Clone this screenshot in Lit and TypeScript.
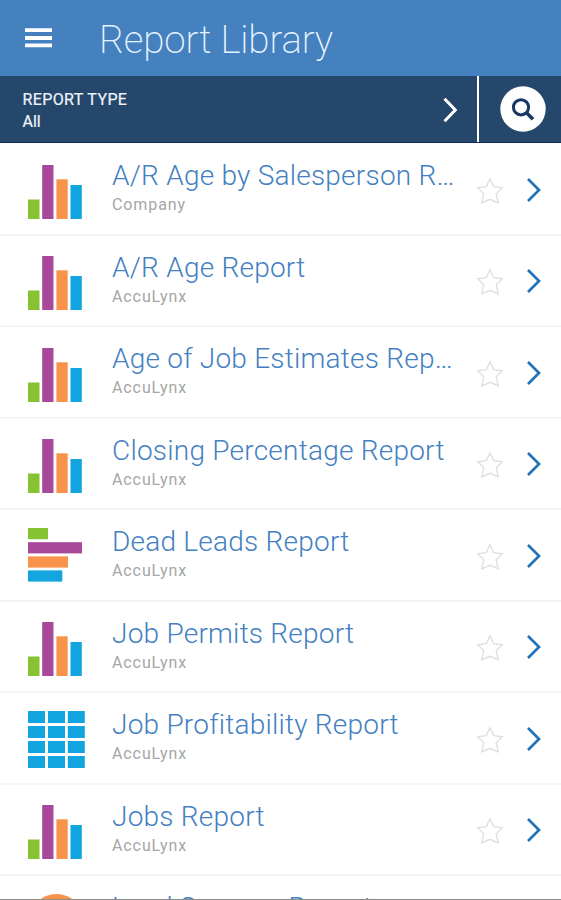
import { LitElement, html, css, svg } from "lit";
import { customElement, property } from "lit/decorators.js";

type Kind = "bars" | "hbars" | "grid" | "pie";

interface Report {
  title: string;
  owner: string;
  kind: Kind;
}

const REPORTS: Report[] = [
  { title: "A/R Age by Salesperson Report", owner: "Company", kind: "bars" },
  { title: "A/R Age Report", owner: "AccuLynx", kind: "bars" },
  { title: "Age of Job Estimates Report", owner: "AccuLynx", kind: "bars" },
  { title: "Closing Percentage Report", owner: "AccuLynx", kind: "bars" },
  { title: "Dead Leads Report", owner: "AccuLynx", kind: "hbars" },
  { title: "Job Permits Report", owner: "AccuLynx", kind: "bars" },
  { title: "Job Profitability Report", owner: "AccuLynx", kind: "grid" },
  { title: "Jobs Report", owner: "AccuLynx", kind: "bars" },
  { title: "Lead Sources Report", owner: "AccuLynx", kind: "pie" },
];

const GREEN = "#86c232";
const PURPLE = "#a8489b";
const ORANGE = "#f9924a";
const BLUE = "#12a5df";

const ICONS = {
  bars: svg`
    <rect x="0" y="34.5" width="11.5" height="19.5" fill=${GREEN} />
    <rect x="14.2" y="0" width="11.3" height="54" fill=${PURPLE} />
    <rect x="28.4" y="14.3" width="11.3" height="39.7" fill=${ORANGE} />
    <rect x="42.5" y="20" width="11.3" height="34" fill=${BLUE} />`,
  hbars: svg`
    <rect x="0" y="0" width="20" height="11.2" fill=${GREEN} />
    <rect x="0" y="14.2" width="54" height="11.2" fill=${PURPLE} />
    <rect x="0" y="28.4" width="40" height="11.2" fill=${ORANGE} />
    <rect x="0" y="42.4" width="34.3" height="11.2" fill=${BLUE} />`,
  grid: svg`${[0, 15, 30, 45].map((y) =>
    [0, 20, 39.8].map(
      (x) => svg`<rect x=${x} y=${y} width="17" height="12" fill=${BLUE} />`
    )
  )}`,
  pie: svg`<circle cx="28.5" cy="27" r="27" fill=${ORANGE} />`,
};

@customElement("report-row")
export class ReportRow extends LitElement {
  @property({ attribute: false }) report!: Report;

  static styles = css`
    :host {
      display: flex;
      box-sizing: border-box;
      height: 91.5px;
      flex: none;
      padding: 0 19px 0 28px;
      border-bottom: 2px solid #f5f5f6;
    }
    .icon {
      flex: none;
      width: 58px;
      height: 58px;
      margin: 20.5px 26px 0 0;
    }
    .icon.hbars {
      margin-top: 18px;
    }
    .icon.grid {
      margin-top: 17.5px;
    }
    .icon.pie {
      margin-top: 17.5px;
    }
    .text {
      flex: none;
      width: 346px;
      padding-top: 15px;
    }
    .title {
      font-size: 28px;
      line-height: 34px;
      font-weight: 300;
      letter-spacing: 0.23px;
      color: #4480c2;
      white-space: nowrap;
      overflow: hidden;
      text-overflow: ellipsis;
    }
    .owner {
      margin-top: 2px;
      font-size: 16px;
      line-height: 20px;
      letter-spacing: 0.9px;
      color: #a6a6a6;
    }
    .star {
      flex: none;
      width: 28px;
      height: 28px;
      margin: 32.5px 0 0 18px;
    }
    .chevron {
      flex: none;
      width: 16px;
      height: 26px;
      margin: 32.5px 0 0 auto;
    }
  `;

  render() {
    const { title, owner, kind } = this.report;
    return html`
      <svg class="icon ${kind}" viewBox="0 0 58 58">${ICONS[kind]}</svg>
      <div class="text">
        <div class="title">${title}</div>
        <div class="owner">${owner}</div>
      </div>
      <svg class="star" viewBox="0 0 28 28">
        <path
          d="M14 1.8 L17.7 9.6 L26.3 10.8 L20.2 16.8 L22.3 25.8 L14 22.3 L5.7 25.8 L7.8 16.8 L1.7 10.8 L10.3 9.6 Z"
          fill="none"
          stroke="#dedede"
          stroke-width="1.3"
        />
      </svg>
      <svg class="chevron" viewBox="0 0 16 26">
        <path d="M2 2 L13 13 L2 24" fill="none" stroke="#2173b9" stroke-width="2.7" />
      </svg>
    `;
  }
}

@customElement("app-root")
export class AppRoot extends LitElement {
  static styles = css`
    :host {
      display: flex;
      flex-direction: column;
      box-sizing: border-box;
      height: 900px;
      overflow: hidden;
      background: #fff;
      border-bottom: 1px solid #8c8c8c;
      font-family: Roboto, "Liberation Sans", sans-serif;
    }
    .header {
      display: flex;
      flex: none;
      height: 76px;
      background: #4580bf;
      color: #e6f4ff;
    }
    .menu {
      width: 27px;
      height: 21px;
      margin: 28px 47px 0 25px;
    }
    .heading {
      margin: 0;
      padding-top: 17px;
      font-size: 38.5px;
      line-height: 46px;
      font-weight: 200;
      letter-spacing: -0.15px;
      white-space: nowrap;
    }
    .filter {
      display: flex;
      flex: none;
      box-sizing: border-box;
      height: 67px;
      background: #24476b;
      border-bottom: 1px solid #0b2a58;
      color: #f0f5fb;
    }
    .type {
      flex: 1;
      padding: 13px 0 0 22.5px;
      font-size: 16px;
      line-height: 22px;
      font-weight: 400;
      -webkit-text-stroke: 0.2px currentColor;
    }
    .label {
      letter-spacing: 0.38px;
    }
    .go {
      width: 16px;
      height: 28px;
      margin: 20px 19px 0 0;
    }
    .search {
      box-sizing: border-box;
      width: 84px;
      padding: 10px 0 0 20.5px;
      border-left: 2px solid #fff;
    }
    .search svg {
      display: block;
      width: 46px;
      height: 46px;
    }
    .list {
      display: flex;
      flex: 1;
      min-height: 0;
      flex-direction: column;
      padding-top: 1px;
      overflow: hidden;
    }
  `;

  render() {
    return html`
      <header class="header">
        <svg class="menu" viewBox="0 0 27 21">
          <path d="M0 2.2H27M0 10H27M0 17.4H27" stroke="#fff" stroke-width="3.8" />
        </svg>
        <h1 class="heading">Report Library</h1>
      </header>
      <section class="filter">
        <div class="type">
          <div class="label">REPORT TYPE</div>
          <div>All</div>
        </div>
        <svg class="go" viewBox="0 0 16 28">
          <path d="M2.5 2.7 L13.3 14 L2.5 25.3" fill="none" stroke="#fff" stroke-width="3" />
        </svg>
        <div class="search">
          <svg viewBox="0 0 46 46">
            <circle cx="23" cy="23" r="22.7" fill="#fff" />
            <circle cx="21" cy="21.3" r="7.6" fill="none" stroke="#173765" stroke-width="3" />
            <path d="M26.5 26.8 L33 33.3" stroke="#173765" stroke-width="3.6" />
          </svg>
        </div>
      </section>
      <main class="list">
        ${REPORTS.map((r) => html`<report-row .report=${r}></report-row>`)}
      </main>
    `;
  }
}
